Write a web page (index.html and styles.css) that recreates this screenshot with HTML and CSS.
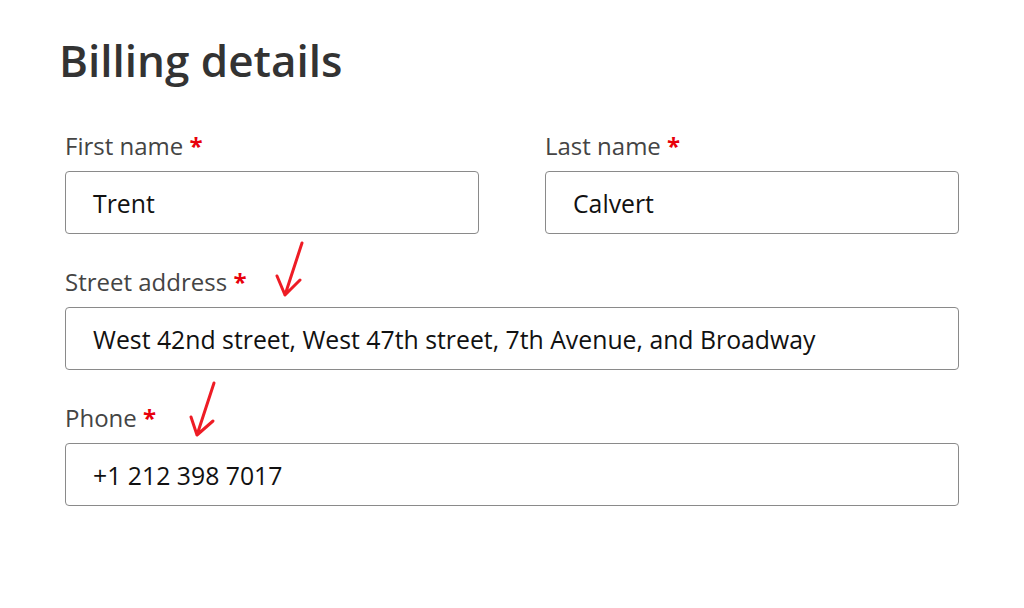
FILE: index.html
```html
<!DOCTYPE html>
<html lang="en">
<head>
    <meta charset="UTF-8">
    <title>Billing details</title>
    <link rel="stylesheet" href="styles.css">
</head>
<body>
    <div class="billing">
        <h1 class="title">Billing details</h1>

        <div class="row two">
            <div class="field">
                <label class="label">First name <span class="req">*</span></label>
                <div class="input">Trent</div>
            </div>
            <div class="field">
                <label class="label">Last name <span class="req">*</span></label>
                <div class="input">Calvert</div>
            </div>
        </div>

        <div class="field">
            <label class="label">Street address <span class="req">*</span></label>
            <div class="input">West 42nd street, West 47th street, 7th Avenue, and Broadway</div>
        </div>

        <div class="field">
            <label class="label">Phone <span class="req">*</span></label>
            <div class="input">+1 212 398 7017</div>
        </div>
    </div>

    <!-- hand-drawn annotation arrows -->
    <svg class="arrow arrow-street" width="40" height="64" viewBox="0 0 40 64">
        <path d="M31 4 L14 56 M6 37 L14 56 L29 41" fill="none" stroke="#ee1c25" stroke-width="3" stroke-linecap="round" stroke-linejoin="round"/>
    </svg>
    <svg class="arrow arrow-phone" width="40" height="64" viewBox="0 0 40 64">
        <path d="M31 4 L14 56 M8 38 L14 56 L30 42" fill="none" stroke="#ee1c25" stroke-width="3" stroke-linecap="round" stroke-linejoin="round"/>
    </svg>
</body>
</html>
```

FILE: styles.css
```css
body {
    margin: 0;
    background: #fff;
    font-family: 'Open Sans', 'Noto Sans', sans-serif;
    color: #333;
}
.billing {
    width: 894px;
    padding: 28px 0 0 65px;
    display: flex;
    flex-direction: column;
    gap: 33px;
}
.title {
    margin: 0 0 6px -6px;
    font-size: 44px;
    font-weight: 600;
    color: #333;
    line-height: 64px;
}
.row.two {
    display: flex;
    gap: 66px;
}
.row.two .field {
    flex: 1;
}
.field {
    display: flex;
    flex-direction: column;
    gap: 10px;
}
.label {
    font-size: 24px;
    line-height: 30px;
    color: #444;
}
.req {
    color: #e8000b;
    font-weight: 700;
}
.input {
    height: 63px;
    box-sizing: border-box;
    border: 1px solid #8a8a8a;
    border-radius: 4px;
    padding: 0 27px;
    display: flex;
    align-items: center;
    font-size: 24.8px;
    color: #111;
    white-space: nowrap;
}
.arrow {
    position: absolute;
}
.arrow-street {
    left: 271px;
    top: 239px;
}
.arrow-phone {
    left: 183px;
    top: 379px;
}
```
